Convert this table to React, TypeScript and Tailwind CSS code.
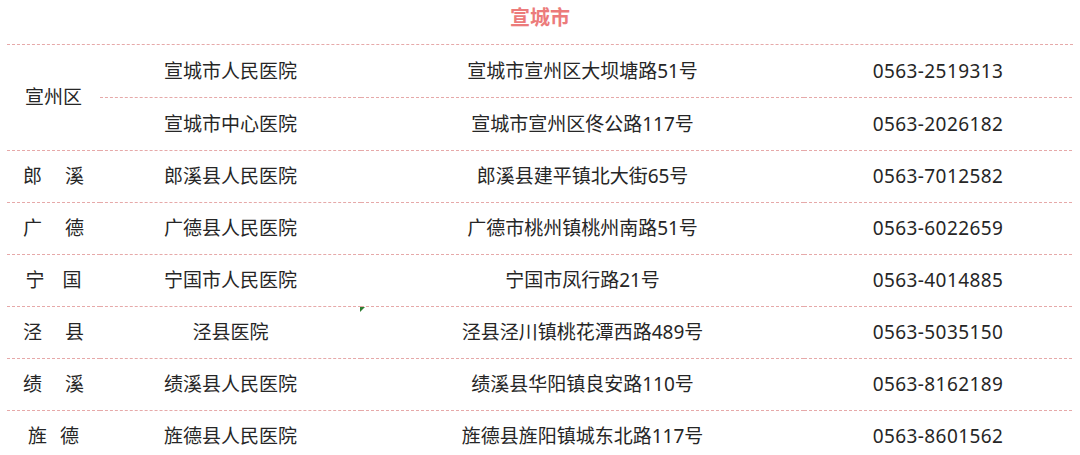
const rows = [
  { district: ['郎', '溪'], gap: 'gap-[23px]', hospital: '郎溪县人民医院', address: '郎溪县建平镇北大街65号', phone: '0563-7012582' },
  { district: ['广', '德'], gap: 'gap-[23px]', hospital: '广德县人民医院', address: '广德市桃州镇桃州南路51号', phone: '0563-6022659' },
  { district: ['宁', '国'], gap: 'gap-[18px]', hospital: '宁国市人民医院', address: '宁国市凤行路21号', phone: '0563-4014885' },
  { district: ['泾', '县'], gap: 'gap-[23px]', hospital: '泾县医院', address: '泾县泾川镇桃花潭西路489号', phone: '0563-5035150' },
  { district: ['绩', '溪'], gap: 'gap-[23px]', hospital: '绩溪县人民医院', address: '绩溪县华阳镇良安路110号', phone: '0563-8162189' },
  { district: ['旌', '德'], gap: 'gap-[13px]', hospital: '旌德县人民医院', address: '旌德县旌阳镇城东北路117号', phone: '0563-8601562' },
];

const line = 'border-b border-dashed border-[#e6a9a9]';

export default function App() {
  return (
    <div
      className="w-[1080px] h-[455px] overflow-hidden bg-white text-[#262626] text-[19px] leading-none"
      style={{ fontFamily: '"Noto Sans", "Noto Sans CJK SC", sans-serif' }}
    >
      <div className="h-[44px] flex justify-center pt-[8px] text-[20px] font-bold text-[#ec7b7b]">
        宣城市
      </div>
      <div className="relative mx-[7px] border-t border-dashed border-[#e6a9a9] grid grid-cols-[93px_261px_443px_268px]">
        {/* 宣州区 spans two hospital rows */}
        <div className={`row-span-2 flex items-center justify-center ${line}`}>宣州区</div>
        <div className={`h-[53px] flex items-center justify-center ${line}`}>宣城市人民医院</div>
        <div className={`h-[53px] flex items-center justify-center ${line}`}>宣城市宣州区大坝塘路51号</div>
        <div className={`h-[53px] flex items-center justify-center tracking-[0.4px] ${line}`}>0563-2519313</div>
        <div className={`h-[53px] flex items-center justify-center ${line}`}>宣城市中心医院</div>
        <div className={`h-[53px] flex items-center justify-center ${line}`}>宣城市宣州区佟公路117号</div>
        <div className={`h-[53px] flex items-center justify-center tracking-[0.4px] ${line}`}>0563-2026182</div>
        {rows.map((r) => (
          <div key={r.phone} className="contents">
            <div className={`h-[52px] flex items-center justify-center ${r.gap} ${line}`}>
              <span>{r.district[0]}</span>
              <span>{r.district[1]}</span>
            </div>
            <div className={`h-[52px] flex items-center justify-center ${line}`}>{r.hospital}</div>
            <div className={`h-[52px] flex items-center justify-center ${line}`}>{r.address}</div>
            <div className={`h-[52px] flex items-center justify-center tracking-[0.4px] ${line}`}>{r.phone}</div>
          </div>
        ))}
        <svg className="absolute left-[353px] top-[262px]" width="5" height="5" viewBox="0 0 5 5">
          <polygon points="0,0 5,0 0,5" fill="#2e7d32" />
        </svg>
      </div>
    </div>
  );
}
